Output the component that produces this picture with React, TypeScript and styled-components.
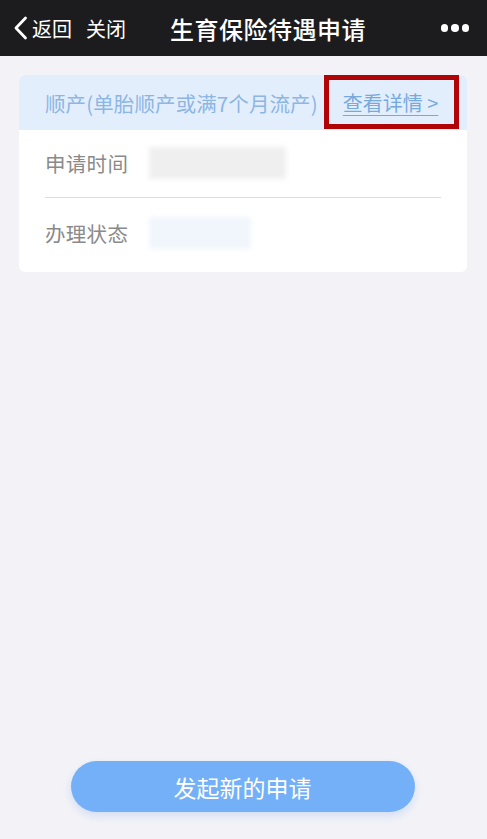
import React from "react";
import styled, { createGlobalStyle } from "styled-components";

const Global = createGlobalStyle`
  html, body { margin: 0; padding: 0; }
  body {
    background: #f3f3f7;
    font-family: "Noto Sans CJK SC", "Noto Sans", sans-serif;
  }
`;

const Page = styled.div`
  width: 487px;
  height: 839px;
  display: flex;
  flex-direction: column;
  background: #f3f3f7;
  overflow: hidden;
`;

const NavBar = styled.div`
  height: 56px;
  flex: none;
  background: #1c1c1e;
  color: #fff;
  display: flex;
  align-items: center;
  position: relative;
  padding: 0 18px 0 13px;
`;

const NavLeft = styled.div`
  display: flex;
  align-items: center;
  font-size: 20px;
  gap: 14px;
`;

const Back = styled.div`
  display: flex;
  align-items: center;
  gap: 4px;
`;

const Title = styled.div`
  position: absolute;
  left: 170px;
  top: 0;
  height: 56px;
  display: flex;
  align-items: center;
  font-size: 24px;
  font-weight: 500;
  letter-spacing: 0.5px;
`;

const More = styled.div`
  margin-left: auto;
  display: flex;
  gap: 3px;
`;

const Dot = styled.span`
  width: 7.5px;
  height: 7.5px;
  border-radius: 50%;
  background: #fff;
`;

const Content = styled.div`
  flex: 1;
  padding: 19px 20px 0 19px;
`;

const Card = styled.div`
  background: #fff;
  border-radius: 6px;
  overflow: hidden;
`;

const CardHead = styled.div`
  height: 55px;
  background: #e3eefc;
  display: flex;
  align-items: center;
  padding-left: 26px;
  position: relative;
`;

const TypeText = styled.span`
  color: #8cb6e4;
  font-size: 20.5px;
  letter-spacing: 0.1px;
`;

const DetailLink = styled.a`
  position: absolute;
  left: 305px;
  top: 0;
  width: 135px;
  height: 54px;
  box-sizing: border-box;
  border: 5px solid #b00406;
  display: flex;
  align-items: center;
  justify-content: center;
  color: #76a9dd;
  font-size: 20px;
  text-decoration: underline;
  text-underline-offset: 4px;
  text-decoration-thickness: 1px;
  padding-right: 2px;
  white-space: pre;
`;

const Rows = styled.div`
  padding: 0 26px 0 26px;
`;

const Row = styled.div<{ $divider?: boolean }>`
  height: ${(p) => (p.$divider ? 68 : 74)}px;
  box-sizing: border-box;
  padding-bottom: ${(p) => (p.$divider ? 1 : 4)}px;
  display: flex;
  align-items: center;
  border-bottom: ${(p) => (p.$divider ? "1.5px solid #dcdcdc" : "none")};
`;

const Label = styled.span`
  color: #8a8a8a;
  font-size: 20.5px;
  letter-spacing: 0.3px;
  width: 104px;
  flex: none;
`;

const Blur = styled.div<{ $w: number; $c: string }>`
  width: ${(p) => p.$w}px;
  height: 32px;
  background: ${(p) => p.$c};
  filter: blur(2.5px);
`;

const Footer = styled.div`
  flex: none;
  display: flex;
  justify-content: center;
  padding-bottom: 27px;
  padding-right: 2px;
`;

const Button = styled.button`
  width: 344px;
  height: 51px;
  border: none;
  border-radius: 26px;
  background: #73b0f8;
  color: #fff;
  font-family: inherit;
  font-size: 23px;
  letter-spacing: 0;
  box-shadow: 0 4px 8px rgba(115, 160, 240, 0.25);
`;

export default function App() {
  return (
    <Page>
      <Global />
      <NavBar>
        <NavLeft>
          <Back>
            <svg width="15" height="26" viewBox="0 0 15 26">
              <path d="M12.5 3 L3 13 L12.5 23" fill="none" stroke="#fff" strokeWidth="2.8" strokeLinecap="round" strokeLinejoin="round" />
            </svg>
            <span>返回</span>
          </Back>
          <span>关闭</span>
        </NavLeft>
        <Title>生育保险待遇申请</Title>
        <More>
          <Dot />
          <Dot />
          <Dot />
        </More>
      </NavBar>
      <Content>
        <Card>
          <CardHead>
            <TypeText>顺产(单胎顺产或满7个月流产)</TypeText>
            <DetailLink>查看详情 &gt;</DetailLink>
          </CardHead>
          <Rows>
            <Row $divider>
              <Label>申请时间</Label>
              <Blur $w={137} $c="#efefef" />
            </Row>
            <Row>
              <Label>办理状态</Label>
              <Blur $w={102} $c="#f1f6fc" />
            </Row>
          </Rows>
        </Card>
      </Content>
      <Footer>
        <Button>发起新的申请</Button>
      </Footer>
    </Page>
  );
}
